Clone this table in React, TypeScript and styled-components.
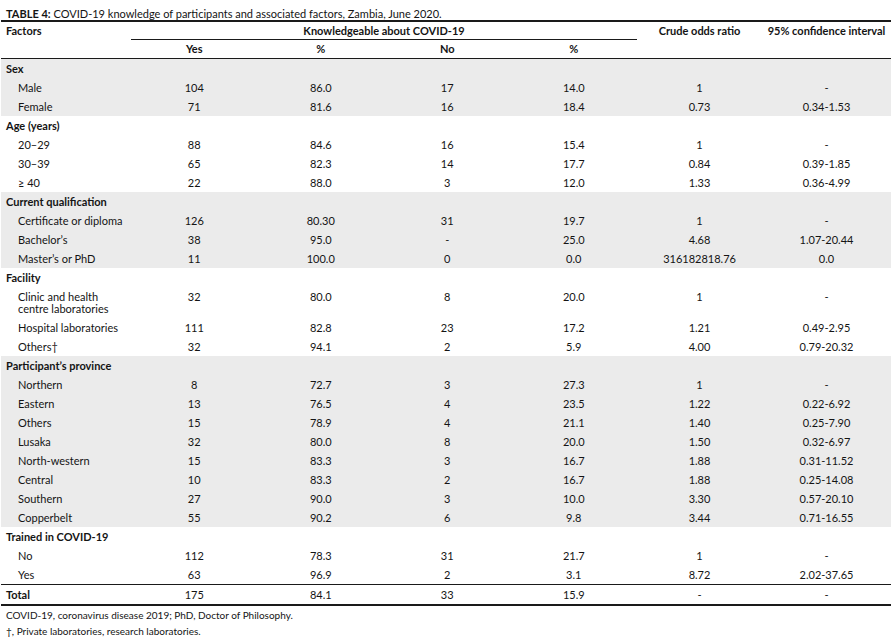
import React from "react";
import styled, { createGlobalStyle } from "styled-components";

const Global = createGlobalStyle`
  html, body { margin: 0; padding: 0; background: #ffffff; }
  body { font-family: Lato, "Open Sans", sans-serif; color: #141414; }
`;

const Page = styled.div`
  width: 891px;
  padding: 7px 0 0 1px;
`;

const Title = styled.div`
  font-size: 11px;
  line-height: 13px;
  padding-left: 5px;
  b { font-weight: 700; }
`;

const Table = styled.table`
  width: 890px;
  table-layout: fixed;
  border-collapse: collapse;
  border-top: 2px solid #1a1a1a;
  border-bottom: 2px solid #1a1a1a;
  font-size: 11px;
`;

const HeadCell = styled.th<{ $align?: "left" | "center"; $underline?: boolean; $h?: number }>`
  font-weight: 700;
  text-align: ${(p) => p.$align ?? "center"};
  vertical-align: top;
  line-height: 12px;
  height: ${(p) => p.$h ?? 18}px;
  padding: ${(p) => (p.$align === "left" ? "3px 0 0 5px" : "3px 0 0 0")};
  box-sizing: border-box;
  border-bottom: ${(p) => (p.$underline ? "1px solid #1a1a1a" : "none")};
`;

const HeadRow = styled.tr<{ $rule?: boolean }>`
  border-bottom: ${(p) => (p.$rule ? "1.5px solid #1a1a1a" : "none")};
`;

const Row = styled.tr<{ $shade?: boolean; $rule?: boolean }>`
  background: ${(p) => (p.$shade ? "#ebebeb" : "#ffffff")};
  border-top: ${(p) => (p.$rule ? "1px solid #1a1a1a" : "none")};
`;

const GroupCell = styled.td`
  font-weight: 700;
  text-align: left;
  vertical-align: top;
  line-height: 12px;
  height: 19px;
  box-sizing: border-box;
  padding: 4px 0 3px 5px;
`;

const LabelCell = styled.td<{ $bold?: boolean }>`
  font-weight: ${(p) => (p.$bold ? 700 : 400)};
  text-align: left;
  vertical-align: top;
  line-height: 12px;
  height: 19px;
  box-sizing: border-box;
  padding: ${(p) => (p.$bold ? "4px 0 3px 5px" : "4px 0 3px 17px")};
`;

const ValueCell = styled.td`
  text-align: center;
  vertical-align: top;
  line-height: 12px;
  height: 19px;
  box-sizing: border-box;
  padding: 4px 0 3px 0;
`;

const Notes = styled.div`
  font-size: 10px;
  line-height: 16px;
  padding: 1px 0 0 5px;
`;

type DataRow = { label: React.ReactNode; v: string[] };
type Group = { title: string; shade: boolean; rows: DataRow[] };

const groups: Group[] = [
  {
    title: "Sex",
    shade: true,
    rows: [
      { label: "Male", v: ["104", "86.0", "17", "14.0", "1", "-"] },
      { label: "Female", v: ["71", "81.6", "16", "18.4", "0.73", "0.34-1.53"] },
    ],
  },
  {
    title: "Age (years)",
    shade: false,
    rows: [
      { label: "20–29", v: ["88", "84.6", "16", "15.4", "1", "-"] },
      { label: "30–39", v: ["65", "82.3", "14", "17.7", "0.84", "0.39-1.85"] },
      { label: "≥ 40", v: ["22", "88.0", "3", "12.0", "1.33", "0.36-4.99"] },
    ],
  },
  {
    title: "Current qualification",
    shade: true,
    rows: [
      { label: "Certificate or diploma", v: ["126", "80.30", "31", "19.7", "1", "-"] },
      { label: "Bachelor’s", v: ["38", "95.0", "-", "25.0", "4.68", "1.07-20.44"] },
      { label: "Master’s or PhD", v: ["11", "100.0", "0", "0.0", "316182818.76", "0.0"] },
    ],
  },
  {
    title: "Facility",
    shade: false,
    rows: [
      {
        label: (
          <>
            Clinic and health
            <br />
            centre laboratories
          </>
        ),
        v: ["32", "80.0", "8", "20.0", "1", "-"],
      },
      { label: "Hospital laboratories", v: ["111", "82.8", "23", "17.2", "1.21", "0.49-2.95"] },
      { label: "Others†", v: ["32", "94.1", "2", "5.9", "4.00", "0.79-20.32"] },
    ],
  },
  {
    title: "Participant’s province",
    shade: true,
    rows: [
      { label: "Northern", v: ["8", "72.7", "3", "27.3", "1", "-"] },
      { label: "Eastern", v: ["13", "76.5", "4", "23.5", "1.22", "0.22-6.92"] },
      { label: "Others", v: ["15", "78.9", "4", "21.1", "1.40", "0.25-7.90"] },
      { label: "Lusaka", v: ["32", "80.0", "8", "20.0", "1.50", "0.32-6.97"] },
      { label: "North-western", v: ["15", "83.3", "3", "16.7", "1.88", "0.31-11.52"] },
      { label: "Central", v: ["10", "83.3", "2", "16.7", "1.88", "0.25-14.08"] },
      { label: "Southern", v: ["27", "90.0", "3", "10.0", "3.30", "0.57-20.10"] },
      { label: "Copperbelt", v: ["55", "90.2", "6", "9.8", "3.44", "0.71-16.55"] },
    ],
  },
  {
    title: "Trained in COVID-19",
    shade: false,
    rows: [
      { label: "No", v: ["112", "78.3", "31", "21.7", "1", "-"] },
      { label: "Yes", v: ["63", "96.9", "2", "3.1", "8.72", "2.02-37.65"] },
    ],
  },
];

const total = ["175", "84.1", "33", "15.9", "-", "-"];

export default function App() {
  return (
    <Page>
      <Global />
      <Title>
        <b>TABLE 4:</b> COVID-19 knowledge of participants and associated factors, Zambia, June 2020.
      </Title>
      <Table>
        <colgroup>
          <col style={{ width: 130 }} />
          <col style={{ width: 126.5 }} />
          <col style={{ width: 126.5 }} />
          <col style={{ width: 126.5 }} />
          <col style={{ width: 126.5 }} />
          <col style={{ width: 125 }} />
          <col style={{ width: 129 }} />
        </colgroup>
        <thead>
          <HeadRow>
            <HeadCell $align="left" rowSpan={2}>
              Factors
            </HeadCell>
            <HeadCell colSpan={4} $underline>
              Knowledgeable about COVID-19
            </HeadCell>
            <HeadCell rowSpan={2}>Crude odds ratio</HeadCell>
            <HeadCell rowSpan={2}>95% confidence interval</HeadCell>
          </HeadRow>
          <HeadRow $rule>
            <HeadCell $h={19}>Yes</HeadCell>
            <HeadCell $h={19}>%</HeadCell>
            <HeadCell $h={19}>No</HeadCell>
            <HeadCell $h={19}>%</HeadCell>
          </HeadRow>
        </thead>
        <tbody>
          {groups.map((g) => (
            <React.Fragment key={g.title}>
              <Row $shade={g.shade}>
                <GroupCell colSpan={7}>{g.title}</GroupCell>
              </Row>
              {g.rows.map((r, i) => (
                <Row key={i} $shade={g.shade}>
                  <LabelCell>{r.label}</LabelCell>
                  {r.v.map((v, j) => (
                    <ValueCell key={j}>{v}</ValueCell>
                  ))}
                </Row>
              ))}
            </React.Fragment>
          ))}
          <Row $rule>
            <LabelCell $bold>Total</LabelCell>
            {total.map((v, j) => (
              <ValueCell key={j}>{v}</ValueCell>
            ))}
          </Row>
        </tbody>
      </Table>
      <Notes>
        <div>COVID-19, coronavirus disease 2019; PhD, Doctor of Philosophy.</div>
        <div>†, Private laboratories, research laboratories.</div>
      </Notes>
    </Page>
  );
}
